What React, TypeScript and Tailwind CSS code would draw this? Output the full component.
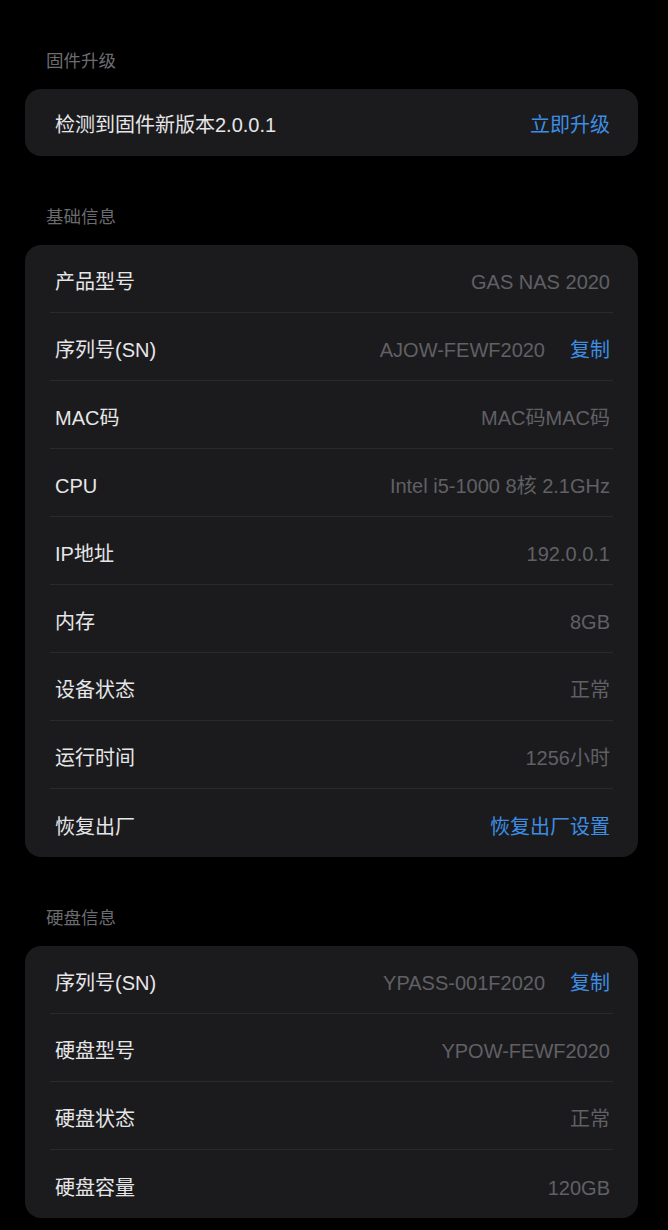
import React from "react";

type Row = { label: string; value?: string; copy?: boolean; link?: string };

const basic: Row[] = [
  { label: "产品型号", value: "GAS NAS 2020" },
  { label: "序列号(SN)", value: "AJOW-FEWF2020", copy: true },
  { label: "MAC码", value: "MAC码MAC码" },
  { label: "CPU", value: "Intel i5-1000 8核 2.1GHz" },
  { label: "IP地址", value: "192.0.0.1" },
  { label: "内存", value: "8GB" },
  { label: "设备状态", value: "正常" },
  { label: "运行时间", value: "1256小时" },
  { label: "恢复出厂", link: "恢复出厂设置" },
];

const disk: Row[] = [
  { label: "序列号(SN)", value: "YPASS-001F2020", copy: true },
  { label: "硬盘型号", value: "YPOW-FEWF2020" },
  { label: "硬盘状态", value: "正常" },
  { label: "硬盘容量", value: "120GB" },
];

function SectionLabel({ children, first }: { children: React.ReactNode; first?: boolean }) {
  return (
    <div
      className={`${first ? "pt-[49px]" : "mt-[49px]"} mb-[16px] pl-[21px] text-[17.5px] leading-[24px] text-[#6c6c70]`}
    >
      {children}
    </div>
  );
}

function InfoRow({ row, last }: { row: Row; last: boolean }) {
  return (
    <div className={`flex h-[68px] items-center justify-between pl-[5px] pr-[3px] ${last ? "" : "border-b border-[#2a2a2d]"}`}>
      <span className="text-[20px] text-[#e6e6e8] pt-[7px]">{row.label}</span>
      <div className="flex items-center gap-[25px] text-[20px] pt-[7px]">
        {row.value && <span className="text-[#606065]">{row.value}</span>}
        {row.copy && <span className="text-[#3d8ee3]">复制</span>}
        {row.link && <span className="text-[#3d8ee3]">{row.link}</span>}
      </div>
    </div>
  );
}

function Card({ rows }: { rows: Row[] }) {
  return (
    <div className="rounded-[16px] bg-[#1b1b1d] px-[25px]">
      {rows.map((r, i) => (
        <InfoRow key={i} row={r} last={i === rows.length - 1} />
      ))}
    </div>
  );
}

export default function App() {
  return (
    <div
      className="min-h-[1230px] bg-black pl-[25px] pr-[30px] pb-[12px]"
      style={{ fontFamily: '"Liberation Sans", "Noto Sans CJK SC", sans-serif' }}
    >
      <SectionLabel first>固件升级</SectionLabel>
      <div className="flex h-[67px] items-center justify-between rounded-[16px] bg-[#1b1b1d] pl-[30px] pr-[28px]">
        <span className="text-[20px] text-[#e6e6e8] pt-[5px]">检测到固件新版本2.0.0.1</span>
        <span className="text-[20px] text-[#3d8ee3] pt-[5px]">立即升级</span>
      </div>

      <SectionLabel>基础信息</SectionLabel>
      <Card rows={basic} />

      <SectionLabel>硬盘信息</SectionLabel>
      <Card rows={disk} />
    </div>
  );
}
